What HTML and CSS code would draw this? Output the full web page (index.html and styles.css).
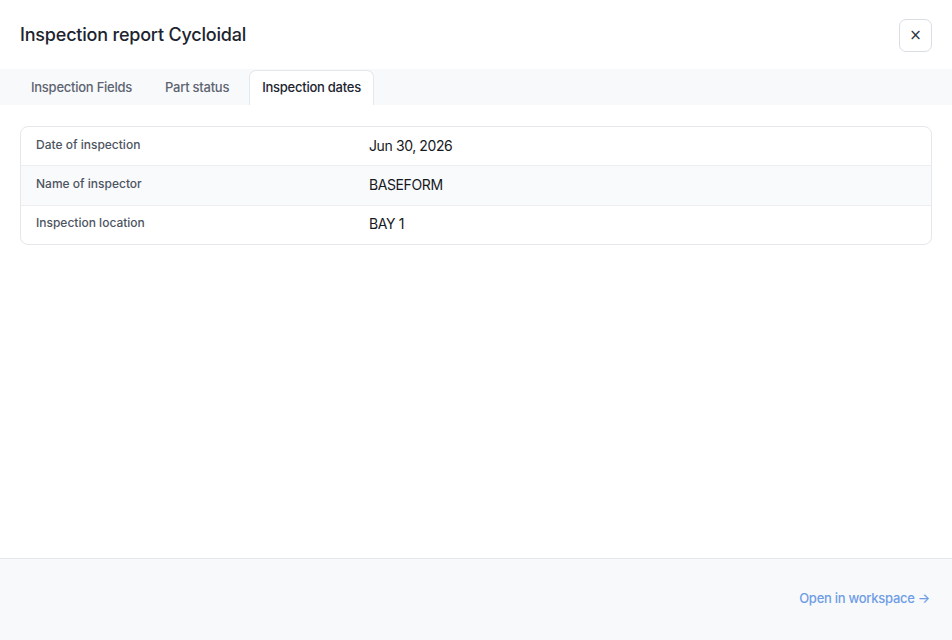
FILE: index.html
```html
<!DOCTYPE html>
<html lang="en">
<head>
<meta charset="utf-8">
<title>Inspection report Cycloidal</title>
<link rel="stylesheet" href="styles.css">
</head>
<body>
<div class="dialog">
  <header class="header">
    <h1 class="title">Inspection report Cycloidal</h1>
    <button class="close" type="button" aria-label="Close">×</button>
  </header>
  <nav class="tabs">
    <div class="tab">Inspection Fields</div>
    <div class="tab">Part status</div>
    <div class="tab active">Inspection dates</div>
  </nav>
  <main class="content">
    <div class="table">
      <div class="row">
        <div class="label">Date of inspection</div>
        <div class="value">Jun 30, 2026</div>
      </div>
      <div class="row alt">
        <div class="label">Name of inspector</div>
        <div class="value">BASEFORM</div>
      </div>
      <div class="row">
        <div class="label">Inspection location</div>
        <div class="value">BAY 1</div>
      </div>
    </div>
  </main>
  <footer class="footer">
    <a class="link" href="#">Open in workspace →</a>
  </footer>
</div>
</body>
</html>
```
FILE: styles.css
```css
* { box-sizing: border-box; }
html, body { margin: 0; padding: 0; }
body {
  font-family: Inter, "Noto Sans", sans-serif;
  color: #1f2328;
  background: #ffffff;
}
.dialog {
  width: 952px;
  height: 640px;
  display: flex;
  flex-direction: column;
  background: #fff;
}
.header {
  height: 69px;
  display: flex;
  align-items: center;
  justify-content: space-between;
  padding: 0 20px;
}
.title {
  margin: 0;
  font-size: 18px;
  font-weight: 500;
  color: #1d2430;
  letter-spacing: -0.2px;
}
.close {
  width: 33px;
  height: 33px;
  border: 1px solid #dadde2;
  border-radius: 7px;
  background: #fff;
  font-family: "DejaVu Sans", sans-serif;
  font-size: 15px;
  color: #2c3440;
  display: flex;
  align-items: center;
  justify-content: center;
  padding: 0;
  margin-top: 1px;
}
.tabs {
  height: 36px;
  background: #f8f9fb;
  display: flex;
  gap: 7px;
  padding: 1px 0 0 18px;
}
.tab {
  height: 35px;
  padding: 0 12px 3px;
  border: 1px solid transparent;
  border-bottom: none;
  border-radius: 7px 7px 0 0;
  display: flex;
  align-items: center;
  font-size: 13px;
  font-weight: 500;
  letter-spacing: -0.25px;
  color: #5d6470;
}
.tab.active {
  background: #fff;
  border-color: #e4e7eb;
  color: #1d2430;
}
.content {
  flex: 1;
  padding: 21px 20px;
}
.table {
  border: 1px solid #e5e7eb;
  border-radius: 8px;
  overflow: hidden;
}
.row {
  display: flex;
  height: 39.5px;
  align-items: center;
  border-top: 1px solid #eceef1;
}
.row:first-child { border-top: none; height: 38px; }
.row.alt { background: #f9fafb; }
.label {
  width: 333px;
  padding-left: 15px;
  font-size: 12px;
  font-weight: 500;
  color: #4d5461;
  margin-top: -4px;
}
.value {
  padding-left: 15px;
  font-size: 14px;
  letter-spacing: -0.4px;
  color: #16191e;
  margin-top: -2px;
}
.footer {
  height: 82px;
  border-top: 1px solid #e4e7eb;
  background: #f8f9fb;
  display: flex;
  align-items: center;
  justify-content: flex-end;
  padding: 0 22px 3px 0;
}
.link {
  font-size: 13px;
  font-weight: 500;
  letter-spacing: -0.27px;
  color: #6e9de6;
  text-decoration: none;
}
```
